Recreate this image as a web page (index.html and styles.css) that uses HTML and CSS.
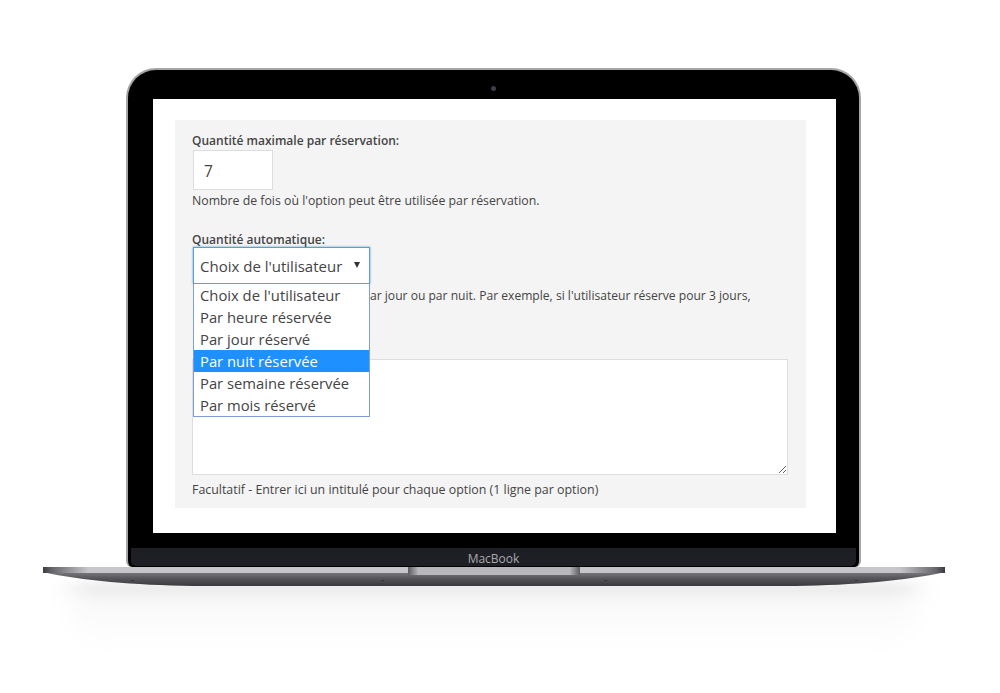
FILE: index.html
```html
<!DOCTYPE html>
<html lang="fr">
<head>
    <meta charset="UTF-8">
    <meta name="viewport" content="width=device-width, initial-scale=1.0">
    <title>Quantité automatique</title>
    <link rel="stylesheet" href="styles.css">
</head>
<body>
    <div class="laptop">
        <div class="lid">
            <div class="camera"></div>
            <div class="screen">
                <div class="panel">
                    <div class="field field-max">
                        <label class="label">Quantité maximale par réservation:</label>
                        <input type="text" class="qty" value="7">
                        <p class="hint hint-max">Nombre de fois où l'option peut être utilisée par réservation.</p>
                    </div>
                    <div class="field field-auto">
                        <label class="label label-auto">Quantité automatique:</label>
                        <div class="select-wrap">
                            <div class="select">
                                <span>Choix de l'utilisateur</span>
                                <i class="arrow"></i>
                            </div>
                            <ul class="options">
                                <li>Choix de l'utilisateur</li>
                                <li>Par heure réservée</li>
                                <li>Par jour réservé</li>
                                <li class="active">Par nuit réservée</li>
                                <li>Par semaine réservée</li>
                                <li>Par mois réservé</li>
                            </ul>
                        </div>
                        <p class="hint hint-auto">ar jour ou par nuit. Par exemple, si l'utilisateur réserve pour 3 jours,</p>
                    </div>
                    <div class="field">
                        <textarea class="labels"></textarea>
                        <p class="hint hint-labels">Facultatif - Entrer ici un intitulé pour chaque option (1 ligne par option)</p>
                    </div>
                </div>
            </div>
            <div class="chin"><span>MacBook</span></div>
        </div>
        <svg class="base" width="902" height="110" viewBox="0 0 902 110">
            <defs>
                <linearGradient id="top" x1="0" x2="1" y1="0" y2="0">
                    <stop offset="0" stop-color="#3c3c40"/>
                    <stop offset="0.01" stop-color="#66666a"/>
                    <stop offset="0.05" stop-color="#c6c6ca"/>
                    <stop offset="0.95" stop-color="#c6c6ca"/>
                    <stop offset="0.99" stop-color="#66666a"/>
                    <stop offset="1" stop-color="#3c3c40"/>
                </linearGradient>
                <linearGradient id="under" x1="0" x2="0" y1="0" y2="1">
                    <stop offset="0.3" stop-color="#77777b"/>
                    <stop offset="0.6" stop-color="#56565a"/>
                    <stop offset="1" stop-color="#3a3a3e"/>
                </linearGradient>
                <linearGradient id="notch" x1="0" x2="1" y1="0" y2="0">
                    <stop offset="0" stop-color="#5c5c60"/>
                    <stop offset="0.06" stop-color="#b8b8bc"/>
                    <stop offset="0.94" stop-color="#b8b8bc"/>
                    <stop offset="1" stop-color="#5c5c60"/>
                </linearGradient>
                <linearGradient id="floor" x1="0" x2="0" y1="0" y2="1">
                    <stop offset="0" stop-color="#e6e6e6"/>
                    <stop offset="0.25" stop-color="#f8f8f8"/>
                    <stop offset="0.6" stop-color="#fdfdfd"/>
                    <stop offset="1" stop-color="#fff"/>
                </linearGradient>
                <filter id="blur" x="-8%" y="-40%" width="116%" height="180%"><feGaussianBlur stdDeviation="14 5"/></filter>
            </defs>
            <rect x="30" y="15" width="842" height="80" fill="url(#floor)" filter="url(#blur)"/>
            <path d="M0 0H902V5C862 14 812 18 752 19H150C90 18 40 14 0 5Z" fill="url(#under)"/>
            <rect width="902" height="6" fill="url(#top)"/>
            <rect x="365" width="172" height="8" fill="url(#notch)"/>
            <rect x="88" y="13" width="3" height="1" fill="#333"/>
            <rect x="338" y="13" width="3" height="1" fill="#333"/>
            <rect x="561" y="13" width="3" height="1" fill="#333"/>
            <rect x="812" y="13" width="3" height="1" fill="#333"/>
        </svg>
    </div>
</body>
</html>
```

FILE: styles.css
```css
body {
    margin: 0;
    height: 693px;
    overflow: hidden;
    background: #fff;
    font-family: "Open Sans", Arial, sans-serif;
    color: #444;
}
.laptop {
    width: 902px;
    padding: 68px 0 0 43px;
}
.lid {
    position: relative;
    box-sizing: border-box;
    width: 735px;
    height: 499px;
    margin-left: 83px;
    padding: 29px 23px 0 25px;
    background: #000;
    border: 2px solid #a5a5a8;
    border-bottom: none;
    border-radius: 30px 30px 6px 6px;
}
.camera {
    position: absolute;
    top: 16px;
    left: 363px;
    width: 5px;
    height: 5px;
    border-radius: 50%;
    background: #3a3f4a;
}
.screen {
    box-sizing: border-box;
    height: 434px;
    padding: 21px 30px 25px 22px;
    background: #fff;
}
.panel {
    box-sizing: border-box;
    height: 388px;
    padding: 12px 18px 0 17px;
    background: #f4f4f4;
    font-size: 12.4px;
}
.label {
    display: block;
    height: 18px;
    line-height: 18px;
    font-size: 12px;
    font-weight: 600;
}
.label-auto {
    height: 16px;
}
.qty {
    display: block;
    box-sizing: border-box;
    width: 80px;
    height: 40px;
    margin-left: 1px;
    padding: 2px 10px 0;
    background: #fff;
    border: 1px solid #ddd;
    font: 15.5px "Open Sans", Arial, sans-serif;
    color: #444;
}
.hint {
    margin: 0;
    height: 20px;
    line-height: 20px;
}
.hint-max {
    padding-top: 1px;
    font-size: 12.3px;
}
.field-max {
    height: 99px;
}
.field-auto {
    height: 110px;
    margin-bottom: 18px;
}
.select-wrap {
    position: relative;
    width: 177px;
    margin-left: 1px;
}
.select {
    box-sizing: border-box;
    display: flex;
    justify-content: space-between;
    align-items: center;
    height: 37px;
    padding: 0 9px 0 6px;
    background: #fff;
    border: 1px solid #5b9dd9;
    box-shadow: 0 0 2px rgba(30, 140, 190, 0.8);
    font-size: 15px;
}
.arrow {
    width: 0;
    height: 0;
    margin-bottom: 2px;
    border-left: 3.5px solid transparent;
    border-right: 3.5px solid transparent;
    border-top: 6px solid #333;
}
.options {
    position: absolute;
    top: 37px;
    left: 0;
    right: 0;
    margin: 0;
    padding: 0;
    list-style: none;
    background: #fff;
    border: 1px solid #7f9ed8;
    border-top: none;
    font-size: 14.8px;
}
.options li {
    height: 22px;
    line-height: 22px;
    padding-left: 6px;
}
.options .active {
    background: #1e90ff;
    color: #fff;
}
.hint-auto {
    padding: 2px 0 0 178px;
    font-size: 12.1px;
    white-space: nowrap;
}
.labels {
    display: block;
    box-sizing: border-box;
    width: 596px;
    height: 116px;
    background: #fff;
    border: 1px solid #ddd;
}
.hint-labels {
    margin-top: 5px;
}
.chin {
    position: absolute;
    left: 3px;
    right: 3px;
    bottom: 1px;
    height: 18px;
    border-radius: 0 0 5px 5px;
    background: #1e1f24;
    text-align: center;
    line-height: 21px;
    font-size: 12px;
    color: #a9a9ad;
}
.base {
    display: block;
}
```
